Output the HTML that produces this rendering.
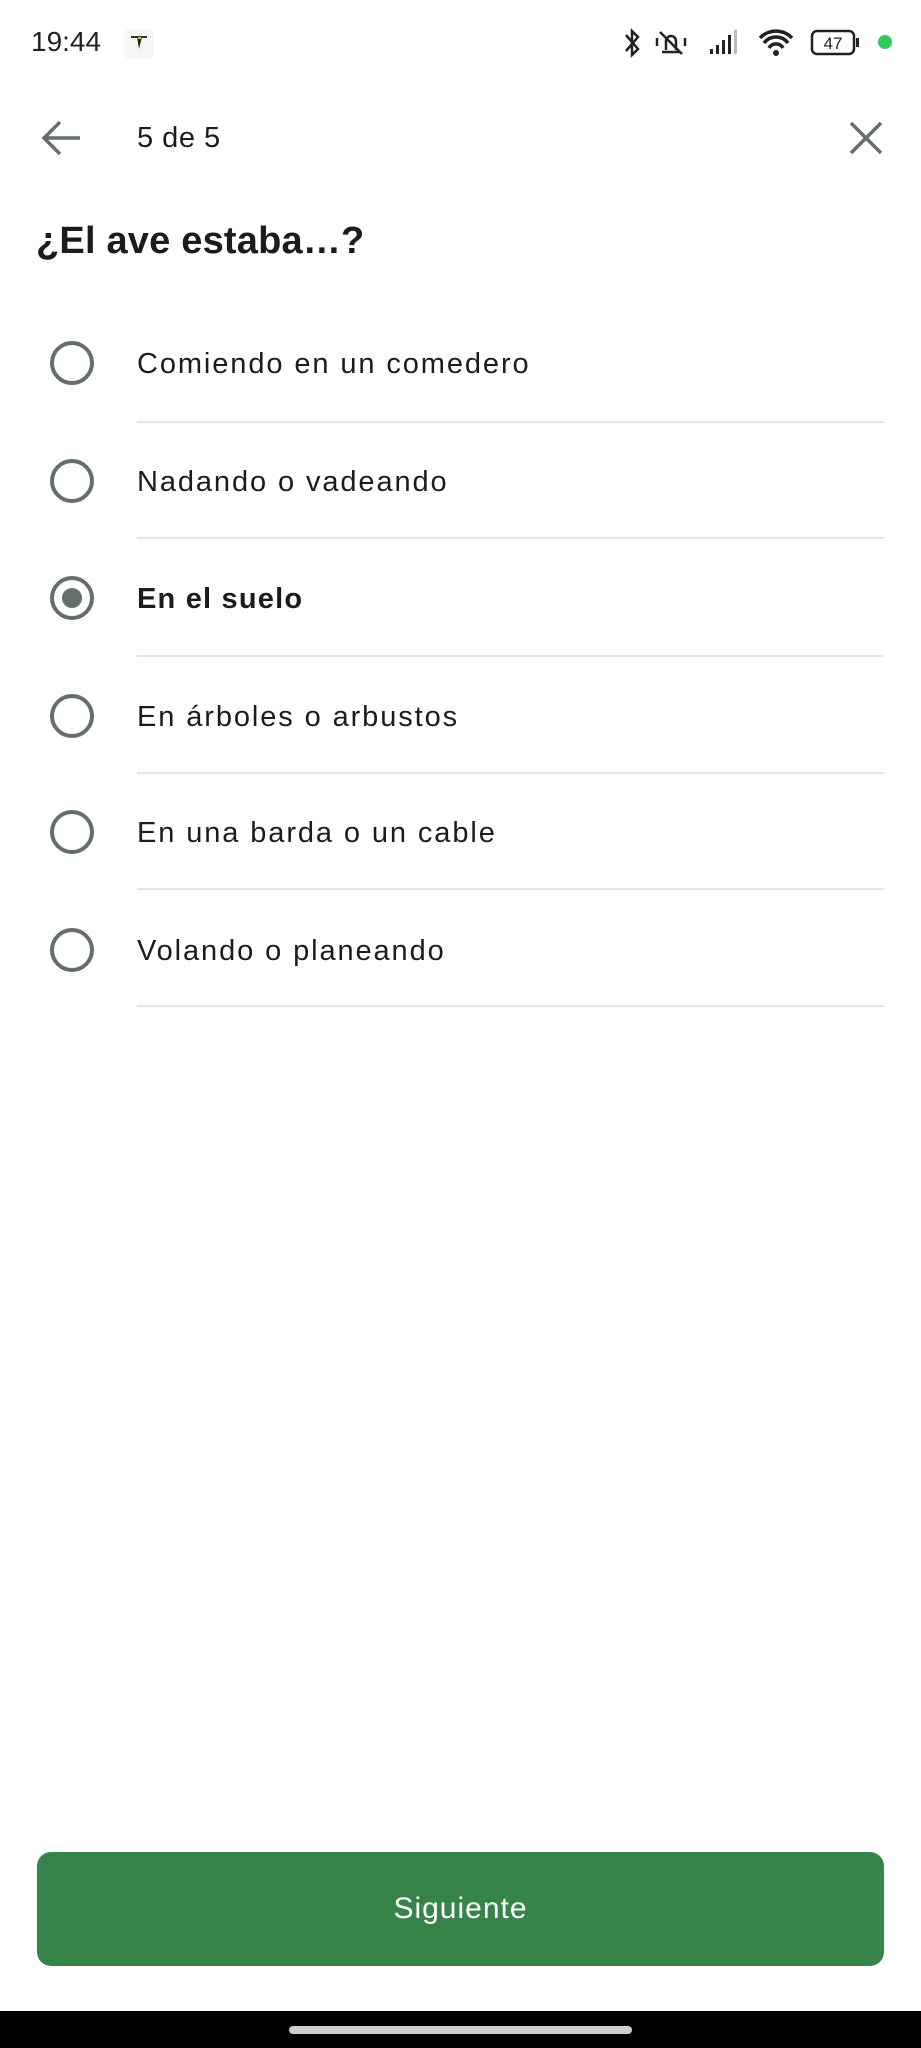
<!DOCTYPE html>
<html><head><meta charset="utf-8"><style>
*{margin:0;padding:0;box-sizing:border-box}
body{width:921px;height:2048px;background:#fff;position:relative;overflow:hidden;font-family:"Liberation Sans",sans-serif;color:#1c1c1c}
.abs{position:absolute}
.opt{position:absolute;left:137px;font-size:29px;letter-spacing:1.9px;line-height:34px}
.rad{position:absolute;left:50px;width:44px;height:44px;border:4px solid #646e6c;border-radius:50%}
.div{position:absolute;left:137px;width:747px;height:2px;background:#e3e5e5}
</style></head><body>
<div class="abs" style="left:31px;top:26px;font-size:28px;color:#222">19:44</div>
<div class="abs" style="left:124px;top:30px;width:30px;height:28px;background:#f6f6f4;border-radius:4px"></div>
<svg class="abs" style="left:128px;top:32px" width="22" height="22" viewBox="0 0 22 22"><path d="M3 5h16" stroke="#333" stroke-width="2"/><path d="M9 5l2 12 3-12z" fill="#222"/><path d="M10 6h3" stroke="#e0c020" stroke-width="2"/></svg>
<svg class="abs" style="left:622px;top:26px" width="280" height="34" viewBox="0 0 280 34">
<path d="M4 9l12 14-6 6V5l6 6-12 14" fill="none" stroke="#222" stroke-width="2.5"/>
<path d="M40 26h18M44 24V15a5 5 0 0 1 10 0v9M38 6l22 22M35 12v8M63 12v8" fill="none" stroke="#222" stroke-width="2.5"/>
<rect x="88" y="23" width="3" height="5" fill="#222"/><rect x="94" y="19" width="3" height="9" fill="#222"/><rect x="100" y="14" width="3" height="14" fill="#222"/><rect x="106" y="9" width="3" height="19" fill="#222"/><rect x="112" y="4" width="3" height="24" fill="#bbb"/>
<path d="M138 12a22 22 0 0 1 32 0M142 17a15 15 0 0 1 24 0M147 22a8 8 0 0 1 14 0" fill="none" stroke="#222" stroke-width="3.5"/><circle cx="154" cy="27" r="3" fill="#222"/>
<rect x="190" y="5" width="42" height="23" rx="5" fill="none" stroke="#222" stroke-width="2.5"/><rect x="234" y="12" width="3" height="9" fill="#222"/>
<text x="211" y="23" font-size="17" text-anchor="middle" fill="#222" font-family="Liberation Sans">47</text>
<circle cx="263" cy="16" r="7" fill="#2ecc5a"/></svg>
<svg class="abs" style="left:40px;top:118px" width="42" height="40" viewBox="0 0 42 40"><path d="M40 20H4M20 4L4 20l16 16" fill="none" stroke="#646e6c" stroke-width="3.5"/></svg>
<div class="abs" style="left:137px;top:122px;font-size:29px;letter-spacing:0.5px">5 de 5</div>
<svg class="abs" style="left:848px;top:120px" width="36" height="36" viewBox="0 0 36 36"><path d="M3 3l30 30M33 3L3 33" stroke="#646e6c" stroke-width="3.5"/></svg>
<div class="abs" style="left:36px;top:220px;font-size:38px;font-weight:bold;letter-spacing:0.2px">¿El ave estaba…?</div>

<div class="rad" style="top:341px"></div><div class="opt" style="top:347px">Comiendo en un comedero</div><div class="div" style="top:421px"></div>
<div class="rad" style="top:459px"></div><div class="opt" style="top:465px">Nadando o vadeando</div><div class="div" style="top:537px"></div>
<div class="rad" style="top:576px"></div><div class="abs" style="left:62px;top:588px;width:20px;height:20px;border-radius:50%;background:#646e6c"></div><div class="opt" style="top:582px;font-weight:bold;letter-spacing:1.2px">En el suelo</div><div class="div" style="top:655px"></div>
<div class="rad" style="top:694px"></div><div class="opt" style="top:700px">En árboles o arbustos</div><div class="div" style="top:772px"></div>
<div class="rad" style="top:810px"></div><div class="opt" style="top:816px">En una barda o un cable</div><div class="div" style="top:888px"></div>
<div class="rad" style="top:928px"></div><div class="opt" style="top:934px">Volando o planeando</div><div class="div" style="top:1005px"></div>

<div class="abs" style="left:37px;top:1852px;width:847px;height:114px;background:#37844b;border-radius:14px;color:#fff;font-size:30px;letter-spacing:1px;text-align:center;line-height:114px">Siguiente</div>
<div class="abs" style="left:0;top:2011px;width:921px;height:37px;background:#000"></div>
<div class="abs" style="left:289px;top:2026px;width:343px;height:8px;border-radius:4px;background:#cfcfcf"></div>
</body></html>
